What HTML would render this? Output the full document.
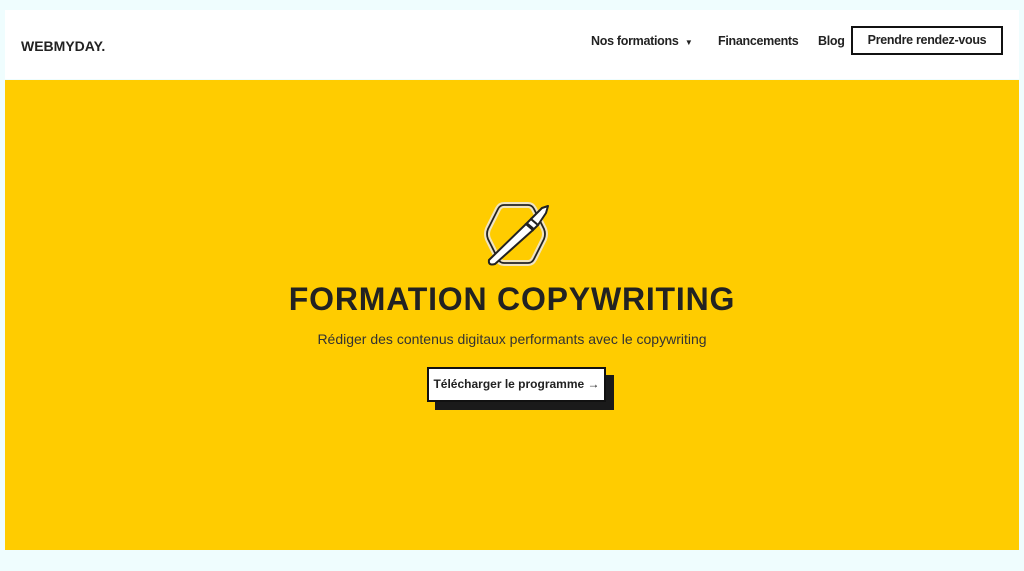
<!DOCTYPE html>
<html><head><meta charset="utf-8"><style>
*{margin:0;padding:0;box-sizing:border-box}
body{width:1024px;height:571px;background:#effdfe;font-family:"Liberation Sans",sans-serif;color:#222;position:relative;overflow:hidden}
.hdr{position:absolute;left:5px;top:10px;width:1014px;height:69px;background:#fff}
.logo{position:absolute;left:21px;top:38px;font-weight:bold;font-size:14px;letter-spacing:0;color:#222}
.nav{position:absolute;top:34px;font-size:12.5px;font-weight:bold;color:#222;letter-spacing:-0.3px}
.cta{position:absolute;left:851px;top:26px;width:152px;height:29px;border:2px solid #111;font-size:12.5px;font-weight:bold;text-align:center;line-height:25px;letter-spacing:-0.3px}
.hero{position:absolute;left:5px;top:80px;width:1014px;height:470px;background:#ffcc00}
h1{position:absolute;left:0;width:1024px;top:281px;text-align:center;font-size:32px;font-weight:bold;color:#222;letter-spacing:0.8px}
.sub{position:absolute;left:0;width:1024px;top:331px;text-align:center;font-size:14px;color:#333}
.btn{position:absolute;left:427px;top:367px;width:179px;height:35px;background:#fff;border:2px solid #111;font-size:12px;font-weight:bold;text-align:center;line-height:31px;color:#222}
.sh{position:absolute;left:435px;top:375px;width:179px;height:35px;background:#1a1a1a}
</style></head><body>
<div class="hdr"></div>
<div class="logo">WEBMYDAY.</div>
<div class="nav" style="left:591px">Nos formations &nbsp;<span style="font-size:8px">&#9660;</span></div>
<div class="nav" style="left:718px">Financements</div>
<div class="nav" style="left:818px">Blog</div>
<div class="cta">Prendre rendez-vous</div>
<div class="hero"></div>
<svg style="position:absolute;left:482px;top:200px" width="70" height="68" viewBox="0 0 70 68">
<path d="M22,5 L46,5 Q50,5 52,9 L62,29 Q64,34 62,39 L52,59 Q50,63 46,63 L22,63 Q18,63 16,59 L6,39 Q4,34 6,29 L16,9 Q18,5 22,5 Z" fill="none" stroke="#f0e4c0" stroke-width="6"/>
<path d="M22,5 L46,5 Q50,5 52,9 L62,29 Q64,34 62,39 L52,59 Q50,63 46,63 L22,63 Q18,63 16,59 L6,39 Q4,34 6,29 L16,9 Q18,5 22,5 Z" fill="none" stroke="#222" stroke-width="1.8"/>
<path d="M7,60 L44,24 L51,30 L13,64 Q6,66 7,60 Z" fill="#fff" stroke="#222" stroke-width="2" stroke-linejoin="round"/>
<path d="M44,24 L49,19 L56,25 L51,30 Z" fill="#fff" stroke="#222" stroke-width="2"/>
<path d="M45,24 L51,29" stroke="#222" stroke-width="3"/>
<path d="M49,19 L60,8 L66,6 L64,13 L56,25 Z" fill="#fff" stroke="#222" stroke-width="2" stroke-linejoin="round"/>
</svg>
<h1>FORMATION COPYWRITING</h1>
<div class="sub">Rédiger des contenus digitaux performants avec le copywriting</div>
<div class="sh"></div>
<div class="btn">Télécharger le programme &rarr;</div>
</body></html>
